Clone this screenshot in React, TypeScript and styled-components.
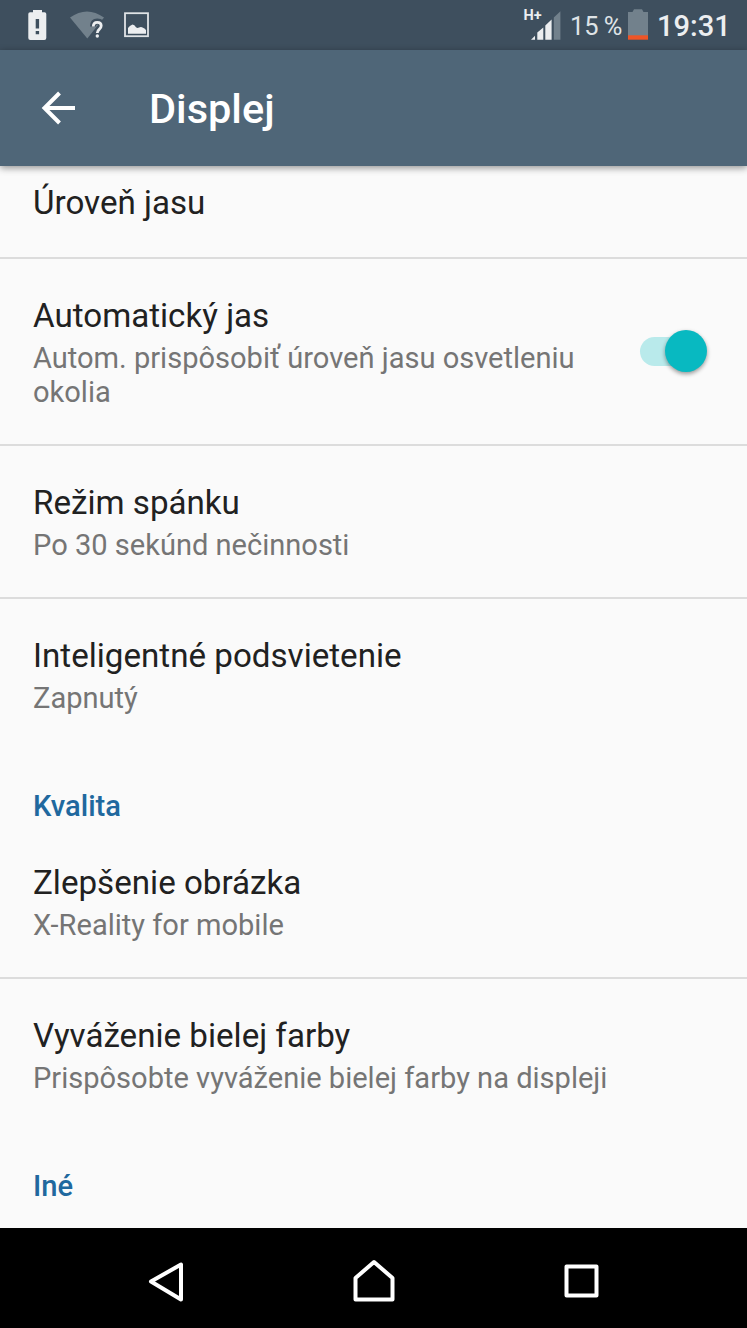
import React from "react";
import styled, { createGlobalStyle } from "styled-components";

const GlobalStyle = createGlobalStyle`
  * { box-sizing: border-box; }
  html, body { margin: 0; padding: 0; background: #fafafa; }
  body { font-family: Roboto, "Noto Sans", sans-serif; }
`;

const Screen = styled.div`
  width: 747px;
  height: 1328px;
  display: flex;
  flex-direction: column;
  overflow: hidden;
  background: #fafafa;
`;

const StatusBar = styled.header`
  flex: none;
  height: 50px;
  display: flex;
  justify-content: space-between;
  background: #3e4f5e;
  color: #eceef0;
`;

const StatusGroup = styled.div`
  display: flex;
  align-items: center;
`;

const Percent = styled.span`
  width: 58px;
  font-size: 25.4px;
  line-height: 50px;
  padding-top: 1px;
  white-space: nowrap;
  word-spacing: -1px;
  color: #dfe3e6;
`;

const Clock = styled.span`
  width: 90px;
  padding-top: 1px;
  font-size: 29.05px;
  line-height: 50px;
  font-weight: 500;
`;

const NetworkType = styled.text`
  font-size: 14.5px;
  font-weight: 700;
  fill: #eceef0;
`;

const AppBar = styled.div`
  flex: none;
  z-index: 1;
  height: 116px;
  display: flex;
  align-items: center;
  padding-left: 41px;
  background: #4f6678;
  color: #fff;
  box-shadow: 0 2px 7px rgba(0, 0, 0, 0.42);
`;

const AppTitle = styled.h1`
  margin: 1px 0 0 73px;
  font-size: 41.5px;
  line-height: 49px;
  font-weight: 500;
`;

const List = styled.main`
  flex: 1;
  min-height: 0;
  overflow: hidden;
`;

const Row = styled.section<{ $divided?: boolean; $scrolled?: boolean }>`
  display: flex;
  align-items: center;
  justify-content: space-between;
  padding: ${(p) => (p.$scrolled ? "17px 40px 35px 33px" : "37px 40px 35px 33px")};
  border-bottom: 2px solid ${(p) => (p.$divided ? "#dcdcdc" : "transparent")};
`;

const RowText = styled.div`
  width: 580px;
`;

const RowTitle = styled.div`
  font-size: 33.15px;
  line-height: 39px;
  color: #212121;
`;

const RowSummary = styled.div`
  margin-top: 6px;
  font-size: 29.05px;
  line-height: 34px;
  color: #757575;
`;

const SectionTitle = styled.h2`
  margin: 0;
  height: 74px;
  padding: 37px 33px 0;
  font-size: 29.1px;
  line-height: 34px;
  font-weight: 500;
  color: #20689e;
`;

const SwitchTrack = styled.div`
  width: 67px;
  height: 29px;
  margin-top: -3px;
  display: flex;
  align-items: center;
  justify-content: flex-end;
  border-radius: 15px;
  background: linear-gradient(90deg, #b9eaeb 50px, transparent 50px);
`;

const SwitchThumb = styled.div`
  flex: none;
  width: 42px;
  height: 42px;
  border-radius: 50%;
  background: #08b9c1;
  box-shadow: 0 2px 4px rgba(0, 0, 0, 0.4);
`;

const NavBar = styled.nav`
  flex: none;
  height: 100px;
  display: flex;
  justify-content: center;
  gap: 144px;
  padding-top: 21px;
  background: #000;
`;

const LeftStatusIcons = () => (
  <svg width="160" height="50" viewBox="0 0 160 50">
    <path d="M33 10h9v2.3h2.5q1.800 0 1.800 1.800v23.800q0 2-2 2H30.300q-2 0-2-2V14.100q0-1.800 1.800-1.800H33z" fill="#eceef0" />
    <path d="M35.700 19h3.400v9.500h-3.400zM35.700 31h3.400v3.200h-3.400z" fill="#3e4f5e" />
    <path d="M70 17.500Q87 5.500 104 17.500L87.300 38.500z" fill="#72818c" />
    <path d="M93 26.500Q93 21.500 97.300 21.500Q101.700 21.500 101.700 25.700Q101.700 28 99.400 29.700Q97.300 31.300 97.300 33" fill="none" stroke="#3e4f5e" strokeWidth="6" />
    <path d="M93.300 26.500Q93.300 22.300 97.300 22.300Q101.200 22.300 101.200 25.700Q101.200 27.700 99.200 29.400Q97.300 31 97.300 33" fill="none" stroke="#eceef0" strokeWidth="2.800" />
    <circle cx="97.300" cy="36" r="1.700" fill="#eceef0" />
    <rect x="125" y="13.200" width="23" height="23" fill="none" stroke="#dfe3e6" strokeWidth="1.800" />
    <path d="M128 33.700V28q1.500-2.300 4.500-3.500q2 .3 3.500 2.800q1.500 1.300 3 .3q2-1.500 4 .2q1.500.3 3 2.200v3.700z" fill="#eceef0" />
  </svg>
);

const SignalIcon = () => (
  <svg width="47" height="50" viewBox="0 0 47 50">
    <NetworkType x="0.500" y="19.500">H+</NetworkType>
    <path d="M8 39.800l4-4v4zM14.300 39.800v-7.300l6-5v12.300zM22.300 39.800V25.400l6.300-5.900v20.300z" fill="#eceef0" />
    <path d="M30.800 39.800V17.500l6.600-6.300v28.600z" fill="#72818c" />
  </svg>
);

const BatteryIcon = () => (
  <svg width="29" height="50" viewBox="0 0 29 50">
    <path d="M0 12h4.500l1.500-2.700h8L15.500 12H20v24H0z" fill="#72818c" />
    <path d="M0 35.300h20v4.400H0z" fill="#ee5527" />
  </svg>
);

const BackArrow = () => (
  <svg width="35" height="34" viewBox="0 0 35 34">
    <path d="M34 17H3M18.500 2L3.500 17l15 15" fill="none" stroke="#fff" strokeWidth="4" />
  </svg>
);

const NavIcon = ({ d }: { d: string }) => (
  <svg width="64" height="64" viewBox="0 0 64 64">
    <path d={d} fill="none" stroke="#fff" strokeWidth="4" strokeLinejoin="round" />
  </svg>
);

type SettingProps = {
  title: string;
  summary?: string;
  divided?: boolean;
  scrolled?: boolean;
  children?: React.ReactNode;
};

const Setting = ({ title, summary, divided, scrolled, children }: SettingProps) => (
  <Row $divided={divided} $scrolled={scrolled}>
    <RowText>
      <RowTitle>{title}</RowTitle>
      {summary && <RowSummary>{summary}</RowSummary>}
    </RowText>
    {children}
  </Row>
);

export default function App() {
  return (
    <>
      <GlobalStyle />
      <Screen>
        <StatusBar>
          <LeftStatusIcons />
          <StatusGroup>
            <SignalIcon />
            <Percent>15 %</Percent>
            <BatteryIcon />
            <Clock>19:31</Clock>
          </StatusGroup>
        </StatusBar>
        <AppBar>
          <BackArrow />
          <AppTitle>Displej</AppTitle>
        </AppBar>
        <List>
          <Setting title="Úroveň jasu" divided scrolled />
          <Setting title="Automatický jas" summary="Autom. prispôsobiť úroveň jasu osvetleniu okolia" divided>
            <SwitchTrack>
              <SwitchThumb />
            </SwitchTrack>
          </Setting>
          <Setting title="Režim spánku" summary="Po 30 sekúnd nečinnosti" divided />
          <Setting title="Inteligentné podsvietenie" summary="Zapnutý" />
          <SectionTitle>Kvalita</SectionTitle>
          <Setting title="Zlepšenie obrázka" summary="X-Reality for mobile" divided />
          <Setting title="Vyváženie bielej farby" summary="Prispôsobte vyváženie bielej farby na displeji" />
          <SectionTitle>Iné</SectionTitle>
        </List>
        <NavBar>
          <NavIcon d="M47 15.500V50.500L17 32.500z" />
          <NavIcon d="M13.500 50.500V29L32 13L50.500 29V50.500z" />
          <NavIcon d="M16.500 17.500h30v29h-30z" />
        </NavBar>
      </Screen>
    </>
  );
}
